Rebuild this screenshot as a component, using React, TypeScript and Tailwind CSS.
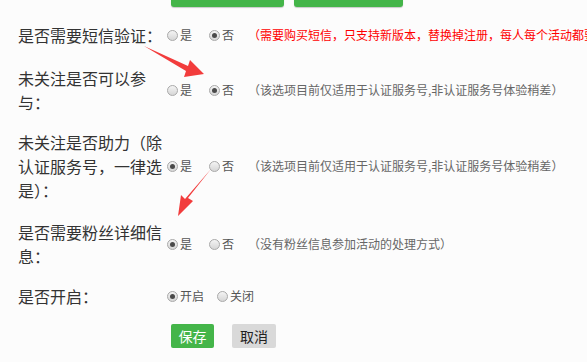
import React from 'react';

const font = { fontFamily: '"Noto Sans CJK SC", "Liberation Sans", sans-serif' };

function Radio({ checked, label, gap = 'mr-[17px]' }: { checked?: boolean; label: string; gap?: string }) {
  return (
    <span className={`flex items-center ${gap}`}>
      <span className="flex h-[11px] w-[11px] items-center justify-center rounded-full border border-[#a9a9a9] bg-gradient-to-b from-[#f4f4f4] to-[#d6d6d6]">
        {checked && <span className="h-[5px] w-[5px] rounded-full bg-[#4a4a4a]" />}
      </span>
      <span className="ml-[2px] text-[12px] leading-[16px] text-[#555]">{label}</span>
    </span>
  );
}

function Note({ text, red }: { text: string; red?: boolean }) {
  return (
    <span className={`-ml-[3px] flex text-[12px] ${red ? 'text-[#ff0000]' : 'text-[#666]'}`}>
      <span className="inline-block w-[12px] text-left">（</span>
      <span>{text}</span>
      <span className="inline-block w-[12px] text-right">）</span>
    </span>
  );
}

function Row({ label, children }: { label: React.ReactNode; children: React.ReactNode }) {
  return (
    <div className="flex items-center">
      <div className="w-[148px] shrink-0 text-[16px] leading-[24px] text-[#333]">{label}</div>
      <div className="flex items-center whitespace-nowrap pl-[1px]">{children}</div>
    </div>
  );
}

export default function App() {
  return (
    <div className="relative h-[362px] w-[587px] overflow-hidden bg-[#fcfcfc]" style={font}>
      <div className="-mt-[23px] flex gap-[10px] pl-[171px]">
        <div className="flex h-[30px] w-[113px] items-end justify-center rounded-[3px] bg-[#44b549] pb-[21px] text-[14px] leading-[16px] text-white shadow-[0_1px_1px_rgba(0,0,0,0.2)]">
          导出数据 Excel
        </div>
        <div className="flex h-[30px] w-[109px] items-end justify-center rounded-[3px] bg-[#44b549] pb-[21px] text-[14px] leading-[16px] text-white shadow-[0_1px_1px_rgba(0,0,0,0.2)]">
          返回 列表
        </div>
      </div>

      <div className="flex flex-col gap-[16px] pl-[18px] pt-[16px]">
        <Row label="是否需要短信验证：">
          <Radio label="是" />
          <Radio checked label="否" />
          <Note red text="需要购买短信，只支持新版本，替换掉注册，每人每个活动都要验证" />
        </Row>
        <div className="pt-[3px]">
          <Row label="未关注是否可以参与：">
            <Radio label="是" />
            <Radio checked label="否" />
            <Note text="该选项目前仅适用于认证服务号,非认证服务号体验稍差" />
          </Row>
        </div>
        <Row label="未关注是否助力（除认证服务号，一律选是）：">
          <Radio checked label="是" />
          <Radio label="否" />
          <Note text="该选项目前仅适用于认证服务号,非认证服务号体验稍差" />
        </Row>
        <div className="pt-[2px]">
          <Row label="是否需要粉丝详细信息：">
            <Radio checked label="是" />
            <Radio label="否" />
            <Note text="没有粉丝信息参加活动的处理方式" />
          </Row>
        </div>
        <Row label="是否开启：">
          <Radio checked label="开启" gap="mr-[13px]" />
          <Radio label="关闭" />
        </Row>
        <div className="flex gap-[18px] pl-[153px]">
          <button className="h-[24px] w-[43px] rounded-[2px] bg-[#44b549] text-[14px] text-white">保存</button>
          <button className="h-[24px] w-[44px] rounded-[2px] bg-[#d9d9d9] text-[14px] text-[#222]">取消</button>
        </div>
      </div>

      <svg className="pointer-events-none absolute left-0 top-0" width="587" height="362">
        <path d="M144 46 L188 66 L190 60 L204 74 L184 77 L186 71 Z" fill="#f23c3c" />
        <path d="M211 169 L188 198 L193 201 L178 216 L181 195 L185 199 Z" fill="#f23c3c" />
      </svg>
    </div>
  );
}
